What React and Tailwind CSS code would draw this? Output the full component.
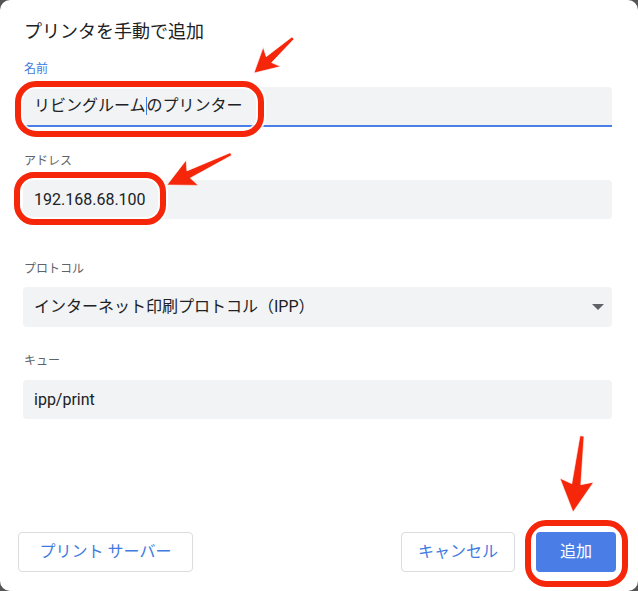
import { useState } from 'react';

const RED = '#f5260a';

// tapered arrow polygon from tail to tip
function arrowPoints([tx, ty], [hx, hy], headLen, headW, tailW, neckW) {
  const dx = hx - tx;
  const dy = hy - ty;
  const len = Math.hypot(dx, dy);
  const ux = dx / len;
  const uy = dy / len;
  const nx = -uy;
  const ny = ux;
  const bx = hx - ux * headLen;
  const by = hy - uy * headLen;
  const notchX = bx + ux * 4;
  const notchY = by + uy * 4;
  const p = (x, y) => `${x.toFixed(1)},${y.toFixed(1)}`;
  return [
    p(tx + nx * tailW / 2, ty + ny * tailW / 2),
    p(notchX + nx * neckW / 2, notchY + ny * neckW / 2),
    p(bx + nx * headW / 2, by + ny * headW / 2),
    p(hx, hy),
    p(bx - nx * headW / 2, by - ny * headW / 2),
    p(notchX - nx * neckW / 2, notchY - ny * neckW / 2),
    p(tx - nx * tailW / 2, ty - ny * tailW / 2),
  ].join(' ');
}

function Annotations() {
  const rings = [
    { x: 18, y: 84, w: 243, h: 50, r: 18 },
    { x: 17, y: 175, w: 146, h: 47, r: 17 },
    { x: 528, y: 523, w: 97, h: 61, r: 18 },
  ];
  const arrows = [
    arrowPoints([293, 38], [254, 73], 24, 26, 3, 8),
    arrowPoints([231, 154], [167, 185], 28, 28, 3, 8),
    arrowPoints([582, 436], [573, 512], 32, 34, 4, 9),
  ];
  return (
    <svg className="pointer-events-none absolute inset-0" width="638" height="591" viewBox="0 0 638 591">
      {rings.map((r, i) => (
        <g key={i}>
          <rect x={r.x} y={r.y} width={r.w} height={r.h} rx={r.r} fill="none" stroke="#fff" strokeWidth="10" opacity="0.8" />
          <rect x={r.x} y={r.y} width={r.w} height={r.h} rx={r.r} fill="none" stroke={RED} strokeWidth="6" />
        </g>
      ))}
      {arrows.map((pts, i) => (
        <polygon key={i} points={pts} fill={RED} stroke="#fff" strokeWidth="1" strokeLinejoin="round" strokeOpacity="0.6" />
      ))}
    </svg>
  );
}

function Label({ children, active }) {
  return (
    <div className={`h-4 text-[12px] leading-4 ${active ? 'text-[#3f7be0]' : 'text-[#5f6368]'}`}>{children}</div>
  );
}

export default function App() {
  const [name] = useState(['リビングルーム', 'のプリンター']);

  return (
    <div className="h-[591px] w-[638px] bg-[#555]">
      <div className="relative flex h-full w-full flex-col rounded-[10px] bg-white font-['Roboto','Noto_Sans_CJK_JP',sans-serif] text-[#202124]">
        <h1 className="pl-6 pt-[20px] text-[18px] leading-6 font-normal">プリンタを手動で追加</h1>

        <div className="pl-[23px] pr-[26px]">
          <div className="mt-[17px] pl-px">
            <Label active>名前</Label>
          </div>
          <div className="mt-[10px] flex h-[40px] items-center rounded-t-[4px] border-b-2 border-[#4a7ee6] bg-[#f1f3f4] px-[11px] text-[16px]">
            <span>{name[0]}</span>
            <span className="h-[18px] w-px bg-[#3f7be0]" />
            <span>{name[1]}</span>
          </div>

          <div className="mt-[26px] pl-px">
            <Label>アドレス</Label>
          </div>
          <div className="mt-[11px] flex h-[39px] items-center rounded-[4px] bg-[#f1f3f4] px-[11px] text-[16px]">
            192.168.68.100
          </div>

          <div className="mt-[42px] pl-px">
            <Label>プロトコル</Label>
          </div>
          <div className="mt-[10px] flex h-[40px] items-center justify-between rounded-[4px] bg-[#f1f3f4] pl-[11px] pr-[8px] text-[16px]">
            <span>インターネット印刷プロトコル（IPP）</span>
            <svg width="12" height="6" viewBox="0 0 12 6">
              <path d="M0 0h12L6 6z" fill="#5f6368" />
            </svg>
          </div>

          <div className="mt-[26px] pl-px">
            <Label>キュー</Label>
          </div>
          <div className="mt-[11px] flex h-[39px] items-center rounded-[4px] bg-[#f1f3f4] px-[11px] text-[16px]">
            ipp/print
          </div>
        </div>

        <div className="mt-auto flex items-center pb-[19px] pl-[18px] pr-[22px]">
          <button className="h-10 w-[175px] rounded-[4px] border border-[#dadce0] bg-white text-[16px] text-[#3f7be0]">
            プリント サーバー
          </button>
          <div className="ml-auto flex gap-[21px]">
            <button className="h-10 w-[114px] rounded-[4px] border border-[#dadce0] bg-white text-[16px] text-[#3f7be0]">
              キャンセル
            </button>
            <button className="h-10 w-[80px] rounded-[4px] bg-[#4a7ee6] text-[16px] text-white">追加</button>
          </div>
        </div>

        <Annotations />
      </div>
    </div>
  );
}
